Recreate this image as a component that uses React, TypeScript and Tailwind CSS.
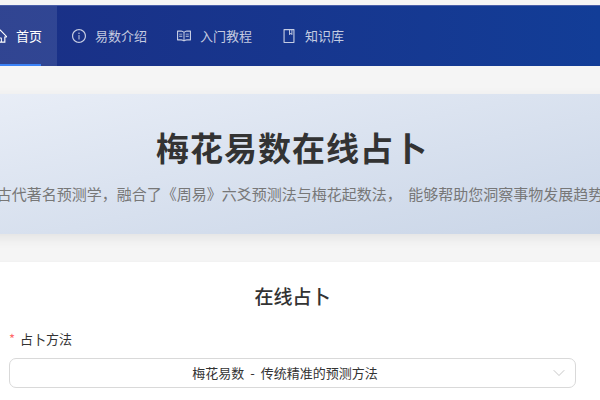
import { ChevronDown } from 'lucide-react'
import { AiOutlineHome, AiOutlineInfoCircle, AiOutlineRead, AiOutlineBook } from 'react-icons/ai'

const cjk = { fontFamily: '"Noto Sans CJK SC", sans-serif' }

const navItems = [
  { label: '易数介绍', Icon: AiOutlineInfoCircle },
  { label: '入门教程', Icon: AiOutlineRead },
  { label: '知识库', Icon: AiOutlineBook },
]

const App = (): JSX.Element => {
  return (
    <div style={cjk} className="w-[600px] h-[400px] overflow-hidden bg-[#f5f5f5] pt-[5px] text-[#333]">
      {/* nav */}
      <nav className="flex h-[61px] -ml-[22px] w-[622px] bg-gradient-to-r from-[#1a2f85] to-[#123d97] border-t border-[#4a5fa8]">
        <div className="flex items-center gap-[8px] pl-[14px] pr-[15px] h-full bg-white/10 text-white text-[13px] relative">
          <AiOutlineHome className="text-[16px]" />
          <span>首页</span>
          <div className="absolute left-0 right-[16px] bottom-0 h-[2px] bg-[#3b82f6]" />
        </div>
        {navItems.map(({ label, Icon }) => (
          <div key={label} className="flex items-center gap-[8px] pl-[14px] pr-[15px] h-full text-white/75 text-[13px]">
            <Icon className="text-[16px]" />
            <span>{label}</span>
          </div>
        ))}
      </nav>

      {/* banner */}
      <section className="mt-[28px] -ml-[38px] w-[660px] h-[140px] bg-gradient-to-br from-[#e9eef7] to-[#c9d5e7] shadow-[0_4px_12px_rgba(0,0,0,0.08)] flex flex-col items-center overflow-hidden">
        <h1 className="mt-[28px] text-[33px] leading-[50px] font-semibold tracking-[1px] text-[#333]">梅花易数在线占卜</h1>
        <p className="mt-[10px] pl-[16px] text-[15px] leading-[24px] text-[#777] whitespace-nowrap [word-spacing:3px]">
          梅花易数是中国古代著名预测学，融合了《周易》六爻预测法与梅花起数法， 能够帮助您洞察事物发展趋势，把握人生方向
        </p>
      </section>

      {/* card */}
      <section className="mt-[28px] -ml-[20px] w-[640px] h-[200px] bg-white pl-[29px] pr-[44px] shadow-[0_1px_4px_rgba(0,0,0,0.05)]">
        <h2 className="pt-[20px] text-[19px] leading-[27px] font-medium text-center text-[#333]">在线占卜</h2>
        <div className="mt-[20px] flex items-center gap-[5px] text-[13px] leading-[20px]">
          <span className="text-[#ff6b6b]">*</span>
          <span>占卜方法</span>
        </div>
        <div className="mt-[9px] relative flex items-center justify-center h-[30px] pr-[15px] rounded-[7px] border border-[#d9d9d9] text-[13px] [word-spacing:3px]">
          <span>梅花易数 - 传统精准的预测方法</span>
          <ChevronDown size={20} strokeWidth={0.8} className="absolute right-[6px] text-[#aaa]" />
        </div>
      </section>
    </div>
  )
}

export default App
